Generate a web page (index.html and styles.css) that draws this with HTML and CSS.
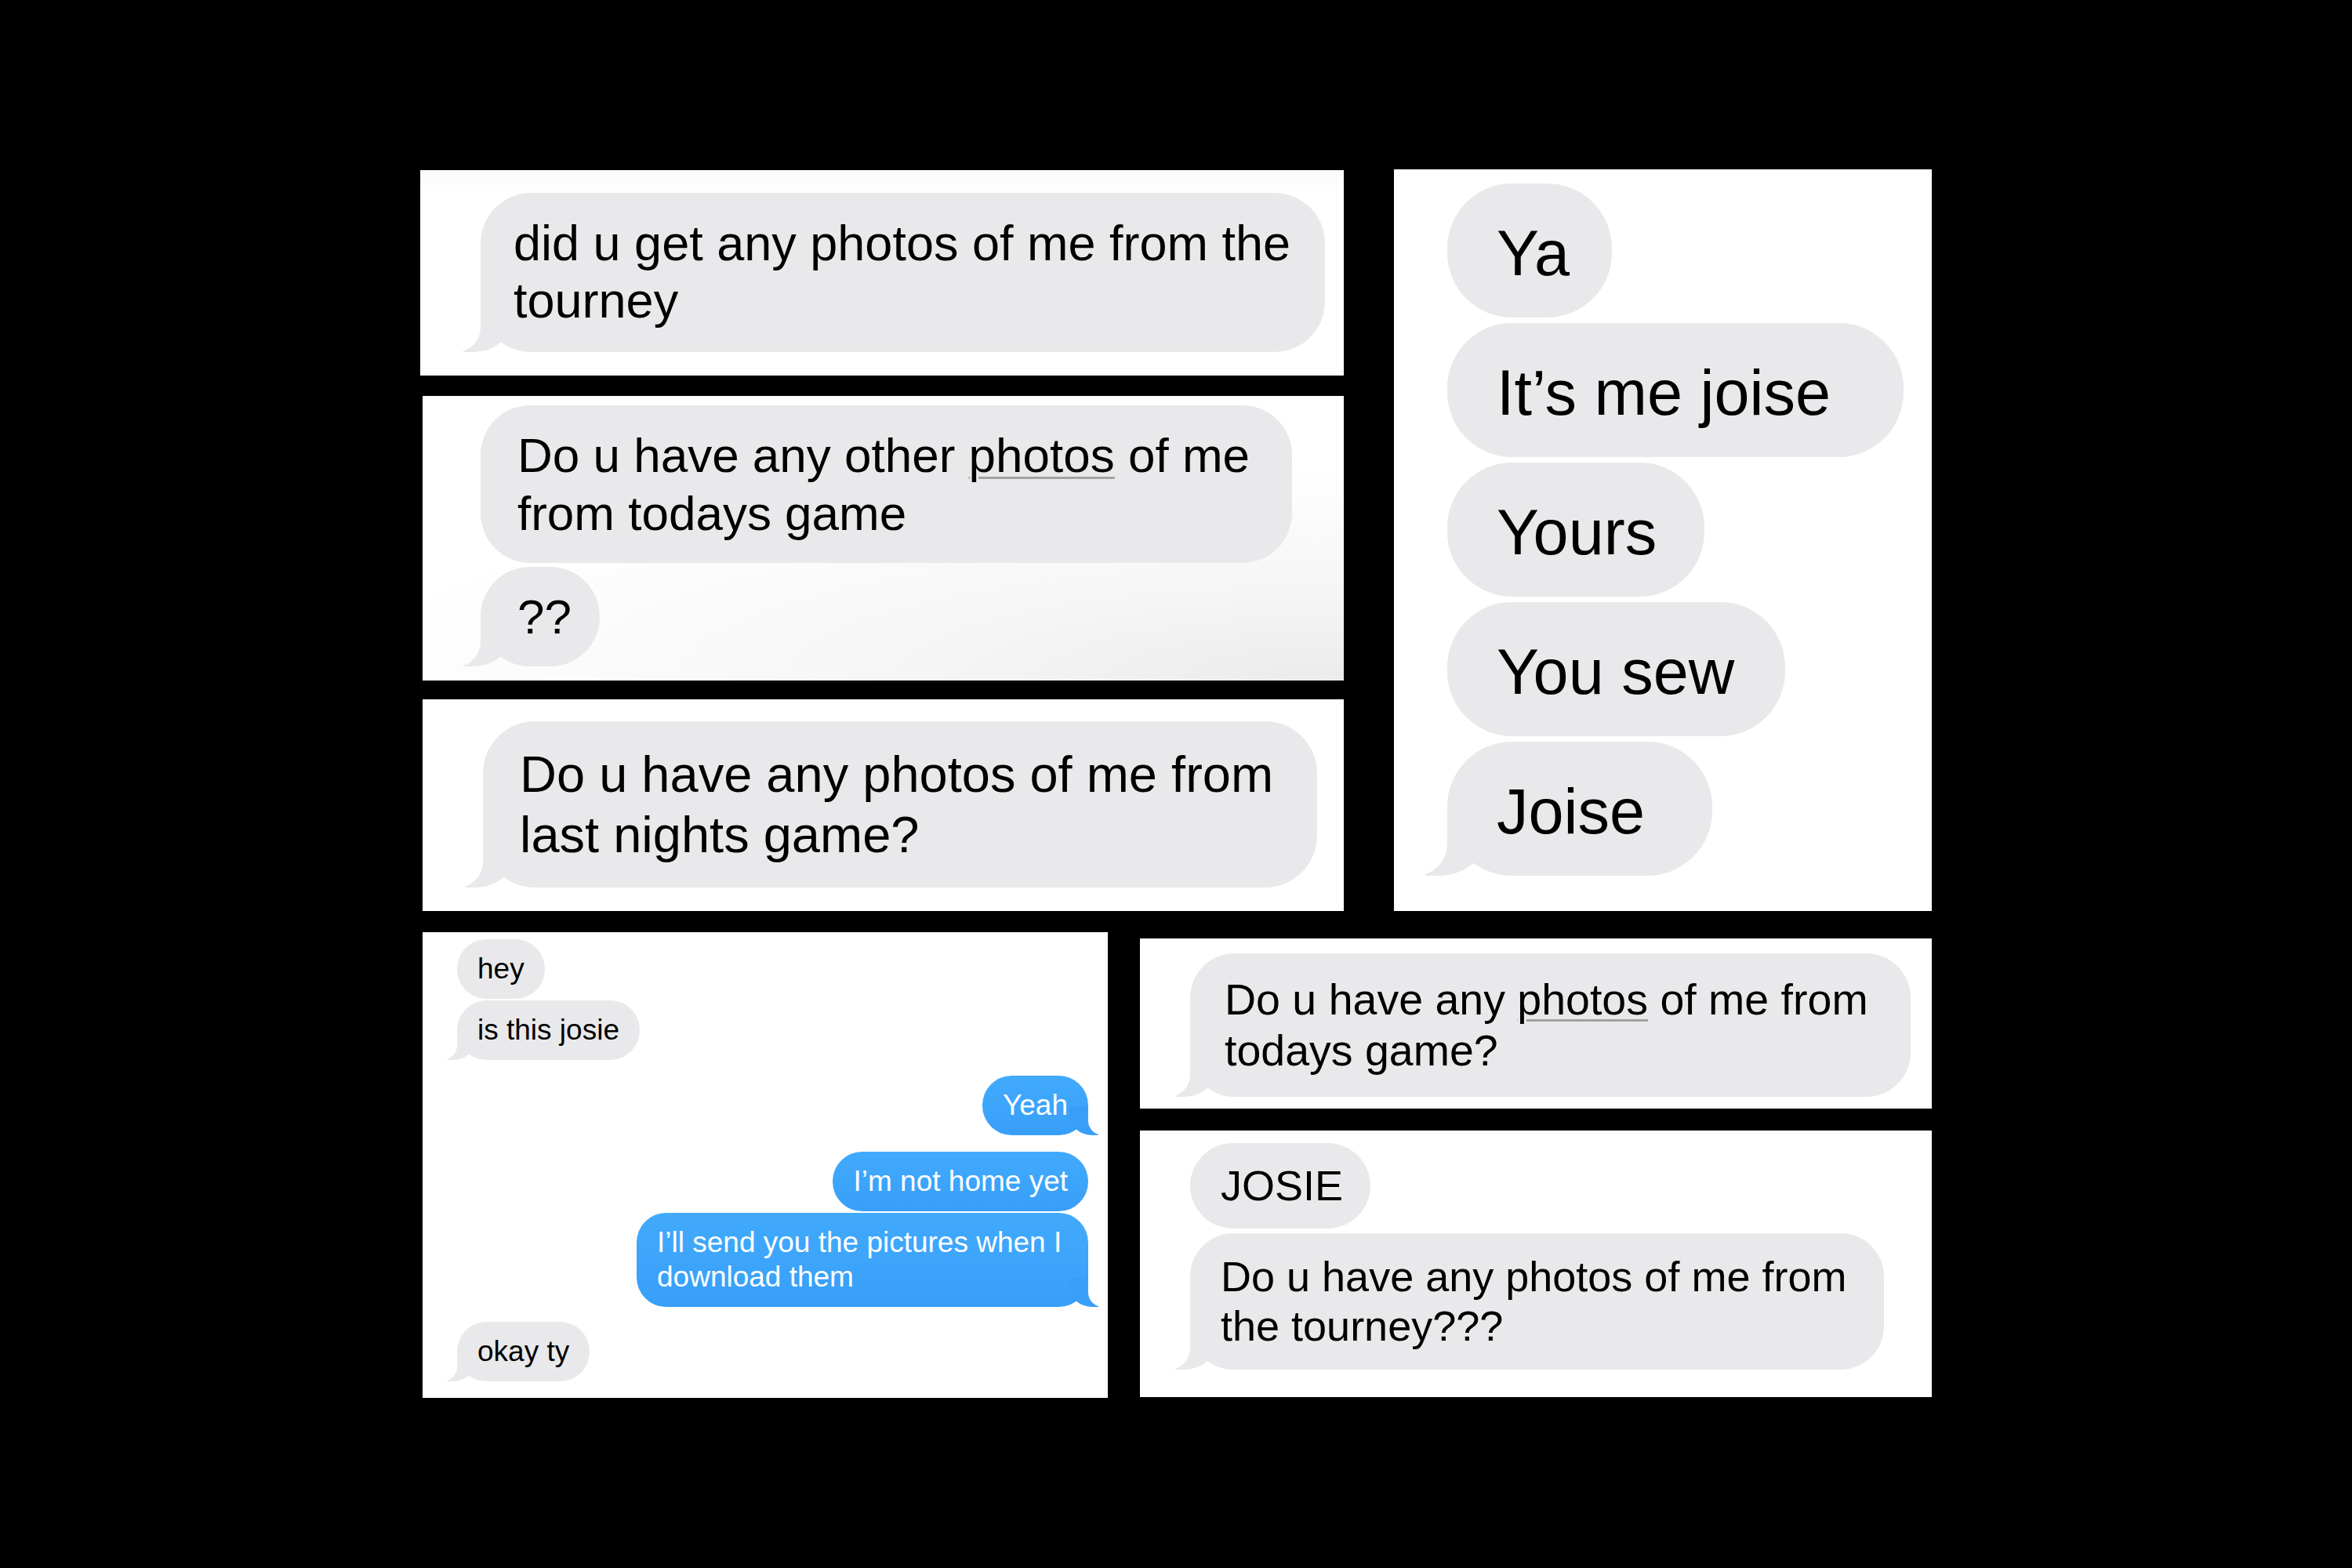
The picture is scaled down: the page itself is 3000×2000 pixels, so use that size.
FILE: index.html
```html
<!DOCTYPE html>
<html lang="en">
<head>
<meta charset="utf-8">
<title>Messages collage</title>
<link rel="stylesheet" href="styles.css">
</head>
<body>
<div class="canvas">
  <div class="top-row">
    <div class="left-col">
      <section class="panel panel-a">
        <div class="bubble recv tail fs-a">did u get any photos of me from the<br>tourney</div>
      </section>
      <section class="panel panel-b">
        <div class="bubble recv fs-b w-b1">Do u have any other <span class="dd">photos</span> of me<br>from todays game</div>
        <div class="bubble recv tail fs-b w-b2">??</div>
      </section>
      <section class="panel panel-c">
        <div class="bubble recv tail fs-c">Do u have any photos of me from<br>last nights game?</div>
      </section>
    </div>
    <section class="panel panel-d">
      <div class="bubble recv fs-d w-ya">Ya</div>
      <div class="bubble recv fs-d w-its">It’s me joise</div>
      <div class="bubble recv fs-d w-yours">Yours</div>
      <div class="bubble recv fs-d w-sew">You sew</div>
      <div class="bubble recv tail fs-d w-joise">Joise</div>
    </section>
  </div>
  <div class="bottom-row">
    <section class="panel panel-e">
      <div class="bubble recv fs-e">hey</div>
      <div class="bubble recv tail fs-e gap-2">is this josie</div>
      <div class="bubble sent tail fs-e gap-20">Yeah</div>
      <div class="bubble sent fs-e gap-21">I’m not home yet</div>
      <div class="bubble sent tail fs-e gap-2 w-send">I’ll send you the pictures when I<br>download them</div>
      <div class="bubble recv tail fs-e gap-19">okay ty</div>
    </section>
    <div class="right-col">
      <section class="panel panel-f">
        <div class="bubble recv tail fs-f">Do u have any <span class="dd">photos</span> of me from<br>todays game?</div>
      </section>
      <section class="panel panel-g">
        <div class="bubble recv fs-g w-josie">JOSIE</div>
        <div class="bubble recv tail fs-g w-g2">Do u have any photos of me from<br>the tourney???</div>
      </section>
    </div>
  </div>
</div>
</body>
</html>
```
FILE: styles.css
```css
* { box-sizing: border-box; margin: 0; padding: 0; }
html, body { background: #000; }
body {
  width: 3000px;
  height: 2000px;
  overflow: hidden;
  font-family: "Liberation Sans", Arial, Helvetica, sans-serif;
  color: #000;
}
.canvas {
  display: flex;
  flex-direction: column;
  gap: 27px;
  padding: 216px 0 0 536px;
}
.top-row { display: flex; gap: 64px; align-items: flex-start; }
.left-col { display: flex; flex-direction: column; align-items: flex-end; }
.bottom-row { display: flex; gap: 41px; align-items: flex-start; padding-left: 3px; }
.right-col { display: flex; flex-direction: column; gap: 28px; margin-top: 8px; }

.panel {
  background: #fff;
  display: flex;
  flex-direction: column;
  align-items: flex-start;
}
.panel-a { width: 1178px; height: 262px; margin-top: 1px; padding: 29px 0 0 77px;
  background: linear-gradient(180deg, #fbfbfb 0%, #fff 10%); }
.panel-b { width: 1175px; height: 363px; margin-top: 26px; padding: 12px 0 0 74px; gap: 5px;
  background: radial-gradient(110% 75% at 100% 100%, #ebebeb 0%, #f6f6f6 45%, #ffffff 100%); }
.panel-c { width: 1175px; height: 270px; margin-top: 24px; padding: 28px 0 0 77px; }
.panel-d { width: 686px; height: 946px; padding: 18px 0 0 68px; gap: 7px; }
.panel-e { width: 874px; height: 594px; padding: 9px 25px 0 44px; }
.panel-f { width: 1010px; height: 217px; padding: 19px 0 0 64px; }
.panel-g { width: 1010px; height: 340px; padding: 16px 0 0 64px; gap: 6px; }

.bubble {
  position: relative;
  background: #e9e9eb;
  border-radius: 1.02em;
  white-space: nowrap;
}
.sent {
  align-self: flex-end;
  color: #fff;
  background: linear-gradient(180deg, #41aafc 0%, #389ff9 100%);
}

/* tails */
.tail::before, .tail::after {
  content: "";
  position: absolute;
  bottom: 0;
  height: 1em;
}
.recv.tail::before {
  left: -0.35em;
  width: 1em;
  background: #e9e9eb;
  border-bottom-right-radius: 0.8em 0.7em;
}
.recv.tail::after {
  left: -0.625em;
  width: 0.625em;
  background: #fff;
  border-bottom-right-radius: 0.5em;
}
.panel-b .recv.tail::after { background: #fdfdfd; }
.sent.tail::before {
  right: -0.35em;
  width: 1em;
  background: #389ff9;
  border-bottom-left-radius: 0.8em 0.7em;
}
.sent.tail::after {
  right: -0.625em;
  width: 0.625em;
  background: #fff;
  border-bottom-left-radius: 0.5em;
}

/* sizes */
.fs-a { font-size: 63px; line-height: 73px; padding: 28px 44px 29px 42px; }
.fs-b { font-size: 62px; line-height: 74px; padding: 27px 0 26px 47px; }
.fs-c { font-size: 65px; line-height: 77px; padding: 29px 0 29px 47px; width: 1064px; }
.fs-d { font-size: 81px; line-height: 100px; padding: 39px 0 32px 63px; }
.fs-e { font-size: 37px; line-height: 44px; padding: 16px 26px; }
.fs-f { font-size: 55.5px; line-height: 65px; padding: 27px 0 26px 44px; width: 919px; }
.fs-g { font-size: 54px; line-height: 63px; padding: 23px 0 23px 39px; }

.w-b1 { width: 1035px; }
.w-b2 { width: 152px; }
.w-ya { width: 210px; }
.w-its { width: 582px; }
.w-yours { width: 328px; }
.w-sew { width: 431px; }
.w-joise { width: 338px; }
.w-send { width: 576px; }
.w-josie { width: 230px; }
.w-g2 { width: 885px; padding-top: 24px; padding-bottom: 24px; }

.gap-2 { margin-top: 2px; }
.gap-19 { margin-top: 19px; }
.gap-20 { margin-top: 20px; }
.gap-21 { margin-top: 21px; }

.dd {
  text-decoration: underline;
  text-decoration-color: #a3a3a3;
  text-decoration-thickness: 3px;
  text-underline-offset: 6px;
}
```
